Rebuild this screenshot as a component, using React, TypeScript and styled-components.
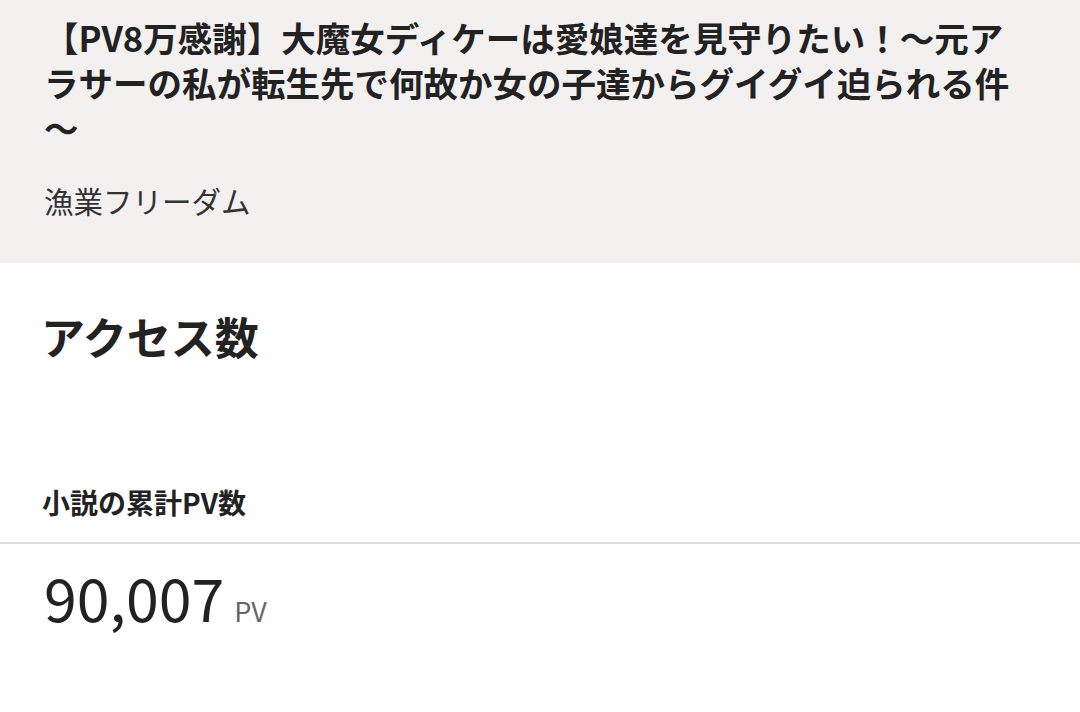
import React from "react";
import styled, { createGlobalStyle } from "styled-components";

const Global = createGlobalStyle`
  html, body { margin: 0; padding: 0; background: #ffffff; }
  body { font-family: "Noto Sans CJK JP", "Noto Sans", sans-serif; color: #222; }
`;

const Page = styled.div`
  width: 1080px;
  min-height: 712px;
  display: flex;
  flex-direction: column;
`;

const Header = styled.header`
  background: #f2f1f0;
  height: 263px;
  box-sizing: border-box;
  padding: 15px 56px 0 44px;
`;

const Title = styled.h1`
  margin: 0;
  font-size: 34.5px;
  line-height: 45px;
  font-weight: 700;
  color: #222;
  line-break: anywhere;
`;

const Author = styled.div`
  margin-top: 30px;
  font-size: 29.5px;
  line-height: 40px;
  font-weight: 400;
  color: #333;
`;

const Section = styled.section`
  display: flex;
  flex-direction: column;
`;

const SectionTitle = styled.h2`
  margin: 0;
  padding: 44px 44px 0 41px;
  font-size: 44px;
  line-height: 58px;
  font-weight: 700;
  color: #222;
`;

const StatLabel = styled.div`
  margin-top: 119px;
  padding: 0 44px 22px 42px;
  font-size: 28px;
  line-height: 36px;
  font-weight: 700;
  color: #222;
  border-bottom: 2px solid #dcdcdc;
`;

const StatValue = styled.div`
  padding: 13px 44px 0;
  display: flex;
  align-items: baseline;
  gap: 10px;
`;

const Number = styled.span`
  font-size: 59px;
  line-height: 80px;
  font-weight: 400;
  color: #222;
`;

const Unit = styled.span`
  font-size: 27px;
  font-weight: 400;
  color: #666;
`;

export default function App() {
  return (
    <Page>
      <Global />
      <Header>
        <Title>
          【PV8万感謝】大魔女ディケーは愛娘達を見守りたい！〜元アラサーの私が転生先で何故か女の子達からグイグイ迫られる件〜
        </Title>
        <Author>漁業フリーダム</Author>
      </Header>
      <Section>
        <SectionTitle>アクセス数</SectionTitle>
        <StatLabel>小説の累計PV数</StatLabel>
        <StatValue>
          <Number>90,007</Number>
          <Unit>PV</Unit>
        </StatValue>
      </Section>
    </Page>
  );
}
